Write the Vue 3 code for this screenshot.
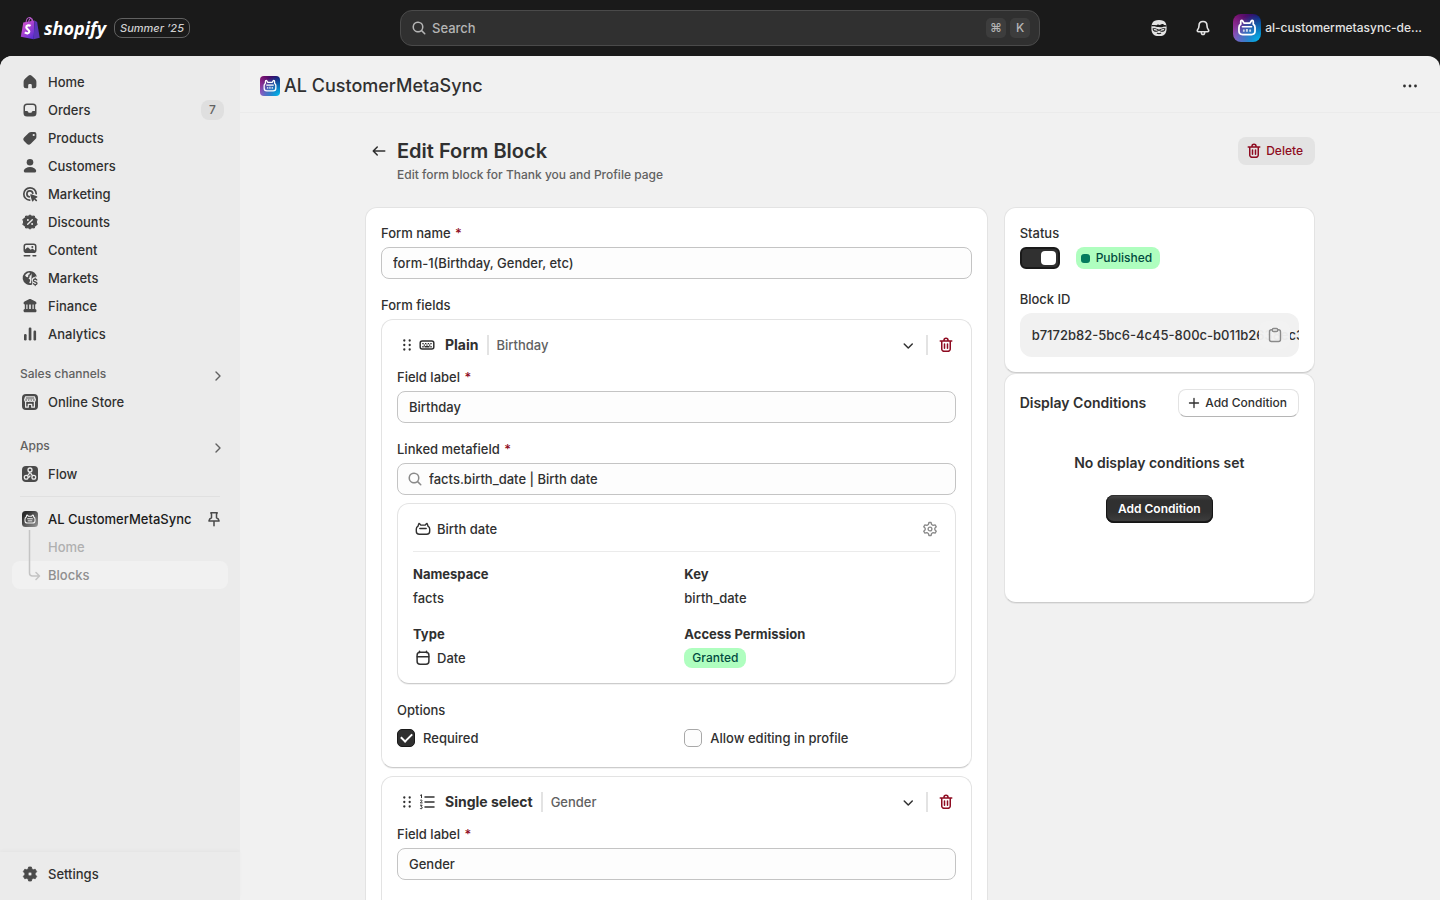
<script setup>
import { h, ref } from 'vue'

const trash = '<path d="M11.5 8.25a.75.75 0 0 1 .75.75v4.25a.75.75 0 0 1-1.5 0V9a.75.75 0 0 1 .75-.75Z"/><path d="M9.25 9a.75.75 0 0 0-1.5 0v4.25a.75.75 0 0 0 1.5 0V9Z"/><path fill-rule="evenodd" d="M7.25 5.25a2.75 2.75 0 0 1 5.5 0h3a.75.75 0 0 1 0 1.5H15v5.45c0 1.68 0 2.52-.327 3.162a3 3 0 0 1-1.311 1.311c-.642.327-1.482.327-3.162.327h-.4c-1.68 0-2.52 0-3.162-.327a3 3 0 0 1-1.311-1.311C5 14.72 5 13.88 5 12.2V6.75h-.75a.75.75 0 0 1 0-1.5h3Zm1.5 0a1.25 1.25 0 1 1 2.5 0h-2.5ZM6.5 6.75h7v5.45c0 .865-.001 1.423-.036 1.848-.033.408-.09.559-.128.633a1.5 1.5 0 0 1-.655.655c-.074.038-.225.095-.633.128-.425.035-.983.036-1.848.036h-.4c-.865 0-1.423-.001-1.848-.036-.408-.033-.559-.09-.633-.128a1.5 1.5 0 0 1-.656-.655c-.037-.074-.094-.225-.127-.633-.035-.425-.036-.983-.036-1.848V6.75Z"/>'
const line = (d, w = 1.5) => `<g fill="none" stroke="currentColor" stroke-width="${w}" stroke-linecap="round" stroke-linejoin="round">${d}</g>`
const catBox = line('<path d="M5 7.200 5.700 4.900c.1-.4.6-.5.9-.2l1.200 1.400h4.400l1.200-1.400c.3-.3.8-.2.9.2l.7 2.300c1.100.6 1.700 1.600 1.700 2.900v2.100c0 2-1.100 3.100-3.100 3.100H6.400c-2 0-3.100-1.100-3.100-3.100v-2.100c0-1.300.6-2.300 1.700-2.900Z"/><path d="M6.800 9.500h6.400"/>', 1.400)

const icons = {
  home: '<path d="M8.300 3.700a2.500 2.500 0 0 1 3.400 0l3.500 3.300c.8.700 1.200 1.700 1.200 2.800v4a2.500 2.500 0 0 1-2.500 2.500h-1.200a.9.900 0 0 1-.9-.9v-2.200a1.200 1.200 0 0 0-1.200-1.200h-1.200a1.200 1.200 0 0 0-1.200 1.200v2.200a.9.900 0 0 1-.9.900H6.100a2.500 2.500 0 0 1-2.500-2.500v-4c0-1.100.4-2.100 1.200-2.800l3.500-3.300Z"/>',
  orders: '<path fill-rule="evenodd" d="M7 3.500h6a3.500 3.500 0 0 1 3.500 3.500v6a3.500 3.500 0 0 1-3.500 3.500H7A3.500 3.500 0 0 1 3.500 13V7A3.500 3.500 0 0 1 7 3.500ZM7 5a2 2 0 0 0-2 2v4h2c.5 0 .8.200 1 .6l.3.600c.2.400.5.600 1 .6h1.400c.5 0 .8-.2 1-.6l.3-.6c.2-.4.5-.6 1-.6h2V7a2 2 0 0 0-2-2H7Z"/>',
  products: '<path fill-rule="evenodd" d="M11.200 4h3.300A1.900 1.900 0 0 1 16.400 5.900v3c0 .8-.3 1.500-.9 2.100l-4.700 4.700a2.800 2.800 0 0 1-4 0L4.300 13.200a2.800 2.800 0 0 1 0-4L8.900 4.800c.6-.5 1.400-.8 2.300-.8Zm2.500 4.100a1.100 1.100 0 1 0 0-2.200 1.100 1.100 0 0 0 0 2.200Z"/>',
  customers: '<circle cx="10" cy="6.300" r="3.300"/><path d="M3.800 14.900c0-1 .8-2 2-2.700 1.200-.7 2.600-1.100 4.200-1.100s3 .4 4.200 1.100c1.200.7 2 1.700 2 2.700 0 .9-.7 1.500-1.600 1.500H5.400c-.9 0-1.600-.6-1.600-1.500Z"/>',
  marketing: line('<path d="M16.200 9.700a6.200 6.200 0 1 0-6.500 6.500"/><path d="M12.800 9.300a3 3 0 1 0-3.500 3.600"/>', 1.700) + '<path d="M10.300 11.200c-.2-.6.300-1.100.9-.9l5.700 1.900c.7.200.7 1.100.1 1.400l-1.700.8 1.700 1.700a.8.800 0 0 1-1.100 1.100l-1.700-1.700-.8 1.600c-.3.600-1.200.6-1.400-.1l-1.700-5.800Z"/>',
  discounts: '<path d="m10 2.900 1.900 1.400 2.400-.3.700 2.200 2.200 1.200-.9 2.600.9 2.600-2.200 1.200-.7 2.200-2.400-.3L10 17.100l-1.900-1.400-2.400.3-.7-2.200-2.200-1.200.9-2.600-.9-2.600L5 6.200 5.700 4l2.400.3L10 2.900Z" stroke="currentColor" stroke-linejoin="round"/><path d="m7.700 12.300 4.600-4.600" stroke="#ebebeb" stroke-width="1.400" stroke-linecap="round"/><circle cx="7.900" cy="8" r="1" fill="#ebebeb"/><circle cx="12.100" cy="12" r="1" fill="#ebebeb"/>',
  content: '<path fill-rule="evenodd" d="M6.300 3.500h7.400a2.800 2.800 0 0 1 2.800 2.800v4a2.800 2.800 0 0 1-2.800 2.800H6.300a2.800 2.800 0 0 1-2.800-2.800v-4a2.800 2.800 0 0 1 2.800-2.800ZM6.300 5C5.600 5 5 5.600 5 6.300v3.200l1.700-1.600c.6-.6 1.400-.6 2 0l2 1.900.7-.6c.6-.5 1.300-.5 1.900 0l1.700 1.200V6.300c0-.7-.6-1.300-1.300-1.300H6.300Z"/><circle cx="12.300" cy="7" r="1"/>' + line('<path d="M4.200 15.800h5.600M13 15.800h2.800"/>', 1.400),
  markets: '<path fill-rule="evenodd" d="M10 3a7 7 0 0 1 6.900 5.900c-.7-.4-1.600-.4-2.300 0-1.700.1-2.900 1.400-2.900 3 0 .8.3 1.500.8 2-.6.800-.7 1.700-.3 2.600A7 7 0 1 1 10 3Zm-.5 1.500C7.800 4.700 6 5.800 5.100 7.500l1.100 1.300c.4.500 1.200.6 1.700.2.500-.5.400-1 .3-1.500 0-.5.300-.9.800-1 .8-.1 1-.7.700-1.200l-.2-.8Zm2.300.4c-.2 1.600-1 2.300-2.200 2.800.3 1.300-.3 2.400-1.300 2.900.9.400 2 .8 1.800 2.100-.1.900-.8 1.200-.8 2.400.6.100 1.200 0 1.800-.2"/>' + line('<path d="M16.800 12c-.4-.7-1-.9-1.700-.9-1 0-1.700.5-1.700 1.300 0 1.900 3.600.8 3.600 2.900 0 .8-.8 1.400-1.800 1.400-.9 0-1.600-.4-1.900-1.100M15.200 10.200v.9M15.200 16.700v.900"/>', 1.300),
  finance: '<path fill-rule="evenodd" d="M9 3.200c.6-.3 1.400-.3 2 0l4.500 2.300c.6.300 1 .9 1 1.500 0 .8-.6 1.400-1.300 1.500v4.600c.8.200 1.300.8 1.300 1.600 0 1-.6 1.500-1.500 1.500H5c-.9 0-1.500-.6-1.500-1.500 0-.8.500-1.400 1.300-1.600V8.500A1.500 1.500 0 0 1 3.500 7c0-.6.4-1.200 1-1.500L9 3.200ZM6.300 8.600V13h1.200V8.600H6.300Zm2.900 0V13h1.600V8.600H9.200Zm3.300 0V13h1.200V8.600h-1.200Z"/>',
  analytics: '<rect x="8.700" y="3.500" width="2.700" height="13" rx="1.200"/><rect x="4" y="10" width="2.600" height="6.500" rx="1.200"/><rect x="13.500" y="6.500" width="2.600" height="10" rx="1.200"/>',
  settings: '<path fill-rule="evenodd" d="M8.600 3h2.800l.5 2 1.300.8 2-.6 1.500 2.500-1.500 1.500v1.600l1.500 1.500-1.500 2.500-2-.6-1.300.8-.5 2H8.600l-.5-2-1.300-.8-2 .6-1.500-2.500 1.500-1.500V9.200L3.300 7.700l1.500-2.500 2 .6L8.100 5l.5-2ZM10 12a2 2 0 1 0 0-4 2 2 0 0 0 0 4Z" stroke="currentColor" stroke-width=".8" stroke-linejoin="round"/>',
  gear: line('<path d="M8.900 3.500h2.200l.5 2 1.500.9 2-.6 1.200 2-1.500 1.400v1.600l1.500 1.400-1.200 2-2-.6-1.500.9-.5 2H8.900l-.5-2-1.500-.9-2 .6-1.200-2 1.500-1.400V9.200L3.700 7.800l1.200-2 2 .6 1.500-.9.500-2Z"/><circle cx="10" cy="10" r="1.900"/>', 1.300),
  store: '<rect x="2" y="2" width="16" height="16" rx="4"/><g fill="none" stroke="#ebebeb" stroke-width="1.200" stroke-linejoin="round"><path d="M5.600 4.800h8.800l1 3c0 1-.7 1.600-1.500 1.600S12.500 8.900 12.500 8c0 .9-.6 1.400-1.300 1.400S10 8.900 10 8c0 .9-.6 1.400-1.300 1.400S7.500 8.900 7.500 8c0 .9-.6 1.400-1.400 1.400S4.600 8.800 4.600 7.800l1-3ZM4.800 7h10.400M5.600 9.500v5.700h2.700v-2.900h3.400v2.900h2.700V9.500"/></g>',
  flow: '<rect x="2" y="2" width="16" height="16" rx="4"/><g fill="none" stroke="#ebebeb" stroke-width="1.300"><circle cx="10" cy="6" r="2"/><circle cx="6.200" cy="13.300" r="1.900"/><circle cx="13.800" cy="13.300" r="1.900"/><path d="M9.700 8c0 1.800-.8 2.500-2.300 3.700M8.100 13.300c1.500 0 1.900-.7 1.900-1.800M12.600 11.800 10.500 9"/></g>',
  appGray: '<defs><linearGradient id="ag" x1="0" y1="0" x2="1" y2="1"><stop offset=".2" stop-color="#2c2c2c"/><stop offset="1" stop-color="#9a9a9a"/></linearGradient></defs><rect x="2" y="2" width="16" height="16" rx="3.500" fill="url(#ag)"/><g transform="translate(2.500 2.600) scale(.75)" color="#f3f3f3">' + catBox + '<path d="M7 12.300h6" stroke="#ddd" stroke-width="1.500"/></g>',
  catBox,
  catWhite: line('<path d="M4.300 6.700V4.200c0-.7.300-1.100.9-1.100.4 0 .7.200.9.500l1.200 2h5.400l1.200-2c.2-.3.5-.5.9-.5.600 0 .9.400.9 1.100v2.500c1 .6 1.600 1.500 1.600 2.800v3.300c0 2.100-1.200 3.200-3.300 3.200H6c-2.100 0-3.300-1.100-3.300-3.200V9.500c0-1.300.6-2.200 1.600-2.800Z"/>', 1.600) + '<path d="M5.800 8.900h8.400" stroke="currentColor" stroke-width="1.300" stroke-linecap="round"/><path d="M6.300 11.300h1.600v2H6.300zM9 11h1.800v2.500H9zM12 11.300h1.700v2H12z" opacity=".75"/>',
  chevronRight: line('<path d="m8 6 4 4-4 4"/>', 1.400),
  chevronDown: '<path d="M5.720 8.470a.75.75 0 0 1 1.060 0l3.470 3.470 3.470-3.470a.75.75 0 1 1 1.060 1.060l-4 4a.75.75 0 0 1-1.060 0l-4-4a.75.75 0 0 1 0-1.060"/>',
  pin: line('<path d="M6.800 3.800h6.400l-.7 1.400v3.600c1.600.7 2.400 1.700 2.600 3.200H4.900c.2-1.500 1-2.500 2.600-3.200V5.200l-.7-1.400ZM10 12v4.800"/>'),
  search: '<path fill-rule="evenodd" d="M12.323 13.383a5.500 5.500 0 1 1 1.060-1.060l2.897 2.897a.75.75 0 1 1-1.060 1.060l-2.897-2.897ZM13 9a4 4 0 1 1-8 0 4 4 0 0 1 8 0Z"/>',
  bell: line('<path d="M10 3.500c-2.500 0-4 1.800-4 4.200 0 2.200-.4 2.900-1.400 4.100-.7.900-.2 1.900.9 1.900h9c1.100 0 1.600-1 .9-1.900-1-1.200-1.400-1.900-1.400-4.100 0-2.400-1.500-4.200-4-4.200ZM8.300 14.200c0 1.500.6 2.300 1.700 2.300s1.700-.8 1.700-2.300"/>', 1.600),
  sidekick: '<path d="M10 2c3.500 0 5.400.8 6.500 2.800.9 1.500 1.100 3.200 1.100 5.200s-.2 3.700-1.100 5.200C15.400 17.200 13.500 18 10 18s-5.400-.8-6.500-2.800C2.600 13.700 2.400 12 2.400 10s.2-3.700 1.100-5.200C4.600 2.800 6.500 2 10 2Z"/><path d="M2.400 7.200c2.300-.3 3.600.1 5.200.1.300-.7 1-1 1.800-.7l1 .4c1.500-.3 2.600-1 4.500-.9l-.6 1c1.100 0 2.200 0 3.300.3l-.1 1-3.200.3c-1.500.7-3 .8-4.300.2-1.500.4-3.200.2-4.300-.6l-3.300-.1v-1Z" fill="#1a1a1a"/><path d="M3.600 10.300c2.300-.3 4.600.3 6.400 1.400 1.800-1.100 4.100-1.700 6.400-1.400.1 2.200-.9 3.500-2.800 3.500-1.500 0-2.600-.8-3.600-1.400-1 .6-2.100 1.400-3.600 1.400-1.900 0-2.900-1.300-2.800-3.500Z" fill="#1a1a1a"/><path d="M5.300 11.700c1 0 1.900.1 2.700.5M14.700 11.700c-1 0-1.900.1-2.700.5" stroke="currentColor" stroke-width="1.200" stroke-linecap="round"/><path d="M8.300 15.300c1.100.5 2.300.5 3.400 0" fill="none" stroke="#1a1a1a" stroke-width="1.100" stroke-linecap="round"/>',
  more: '<circle cx="4.500" cy="10" r="1.400"/><circle cx="10" cy="10" r="1.400"/><circle cx="15.500" cy="10" r="1.400"/>',
  arrowLeft: '<path d="M16.500 10a.75.75 0 0 1-.75.75H6.060l2.720 2.720a.75.75 0 0 1-1.060 1.060l-4-4a.75.75 0 0 1 0-1.060l4-4a.75.75 0 1 1 1.060 1.060L6.060 9.250h9.690a.75.75 0 0 1 .75.75Z"/>',
  trash,
  drag: '<g><circle cx="7.300" cy="5.500" r="1.150"/><circle cx="7.300" cy="10" r="1.150"/><circle cx="7.300" cy="14.500" r="1.150"/><circle cx="12.700" cy="5.500" r="1.150"/><circle cx="12.700" cy="10" r="1.150"/><circle cx="12.700" cy="14.500" r="1.150"/></g>',
  keyboard: line('<rect x="3.200" y="6" width="13.600" height="8" rx="2"/><path d="M8 11.800h4"/>') + '<path d="M5.300 8h1.400v1.300H5.300zM8 8h1.400v1.300H8zM10.700 8h1.400v1.300h-1.400zM13.300 8h1.400v1.300h-1.400zM5.300 11.100h1.400v1.300H5.300zM13.300 11.100h1.400v1.300h-1.400zM6.700 9.600H8v1.200H6.700zM9.400 9.600h1.200v1.200H9.400zM12 9.600h1.300v1.200H12z"/>',
  numbered: line('<path d="M8 5h9M8 10h9M8 15h9"/>') + line('<path d="m3.500 3.300 1-.6v3M3.300 8.300c.5-.6 1.700-.5 1.700.4 0 .7-1 1.200-1.700 2.200H5.200M3.400 13.200h1.700l-1 1.400c1.500 0 1.500 2.200 0 2.200-.4 0-.7-.1-.9-.4"/>', 1),
  calendar: line('<path d="M6.500 3.300v1.200M13.500 3.300v1.200"/><rect x="4.100" y="4.300" width="11.800" height="11.900" rx="3"/><path d="M4.300 8.800h11.400"/>'),
  clipboard: line('<path d="M7.300 4.800H6.500c-1.100 0-2 .9-2 2v7.700c0 1.100.9 2 2 2h7c1.100 0 2-.9 2-2V6.800c0-1.100-.9-2-2-2h-.8"/><rect x="7.300" y="3.500" width="5.400" height="3" rx="1.300"/>', 1.400),
  plus: line('<path d="M10 5v10M5 10h10"/>'),
}

const Icon = (props) => h('svg', { viewBox: '0 0 20 20', fill: 'currentColor', 'aria-hidden': 'true', innerHTML: icons[props.name] })
Icon.props = ['name']

const nav = [
  { label: 'Home', icon: 'home' },
  { label: 'Orders', icon: 'orders', count: 7 },
  { label: 'Products', icon: 'products' },
  { label: 'Customers', icon: 'customers' },
  { label: 'Marketing', icon: 'marketing' },
  { label: 'Discounts', icon: 'discounts' },
  { label: 'Content', icon: 'content' },
  { label: 'Markets', icon: 'markets' },
  { label: 'Finance', icon: 'finance' },
  { label: 'Analytics', icon: 'analytics' },
]

const formName = ref('form-1(Birthday, Gender, etc)')
const birthdayLabel = ref('Birthday')
const metafield = ref('facts.birth_date | Birth date')
const genderLabel = ref('Gender')
const required = ref(true)
const editable = ref(false)
const published = ref(true)
</script>

<template>
  <div class="shell">
    <header class="topbar">
      <a class="brand" href="#" aria-label="shopify home">
        <svg class="bag" viewBox="0 0 20 24" aria-hidden="true">
          <defs>
            <linearGradient id="bagFill" x1="0" y1="0" x2="0.8" y2="1">
              <stop offset="0" stop-color="#e05bd0" /><stop offset="0.55" stop-color="#a23fd0" /><stop offset="1" stop-color="#5b2fd6" />
            </linearGradient>
          </defs>
          <path d="M6 7c.2-3 1.700-5.500 3.500-5.500 1.500 0 2.500 1.700 2.500 4M8.500 6.500C9 3.500 10 2.300 11 2.500c1.200.2 1.700 1.500 1.700 3" fill="none" stroke="#b558c8" stroke-width="1.100" />
          <path d="M3.300 6.400 14.500 4.500l-.8 18.700L.8 20.800Z" fill="url(#bagFill)" />
          <path d="m14.500 4.500 2.600 1.600 2.600 15.600-6 1.500Z" fill="#5a35b8" />
          <path d="M10.600 9.800c-1.300-.9-4.300-.7-4.300 1.500 0 2 3.300 2.100 3 4.400-.3 2-2.700 2-4.500.7" fill="none" stroke="#fff" stroke-width="2.200" />
        </svg>
        <span class="wordmark">shopify</span>
        <span class="edition">Summer ’25</span>
      </a>
      <label class="search">
        <Icon name="search" class="ic" />
        <input type="text" placeholder="Search" aria-label="Search" />
        <kbd>⌘</kbd><kbd>K</kbd>
      </label>
      <div class="actions">
        <button class="top-btn" aria-label="Sidekick"><Icon name="sidekick" class="ic" /></button>
        <button class="top-btn" aria-label="Notifications"><Icon name="bell" class="ic" /></button>
        <button class="account">
          <span class="app-logo large"><Icon name="catWhite" /></span>
          <span>al-customermetasync-de...</span>
        </button>
      </div>
    </header>

    <div class="frame">
      <aside class="sidebar">
        <nav class="nav">
          <a v-for="item in nav" :key="item.label" class="item" href="#">
            <Icon :name="item.icon" class="ic" />
            <span class="grow">{{ item.label }}</span>
            <span v-if="item.count" class="count">{{ item.count }}</span>
          </a>
          <button class="section first">Sales channels<Icon name="chevronRight" class="ic" /></button>
          <a class="item" href="#"><Icon name="store" class="ic" />Online Store</a>
          <button class="section">Apps<Icon name="chevronRight" class="ic" /></button>
          <a class="item" href="#"><Icon name="flow" class="ic" />Flow</a>
          <hr />
          <div class="app-group">
            <a class="item" href="#"><Icon name="appGray" class="ic" /><span class="grow">AL CustomerMetaSync</span><Icon name="pin" class="ic" /></a>
            <a class="item sub" href="#">Home</a>
            <a class="item sub current" href="#">Blocks</a>
            <svg class="branch" viewBox="0 0 14 54" aria-hidden="true">
              <path d="M1.500 0v43c0 2 1 3 3 3h6.500M8 42.500l3.500 3.500L8 49.500" fill="none" stroke="#c4c4c4" stroke-width="1.500" stroke-linecap="round" stroke-linejoin="round" />
            </svg>
          </div>
        </nav>
        <div class="nav-foot">
          <a class="item" href="#"><Icon name="settings" class="ic" />Settings</a>
        </div>
      </aside>

      <main class="main">
        <div class="appbar">
          <span class="app-logo"><Icon name="catWhite" /></span>
          <span class="app-title">AL CustomerMetaSync</span>
          <button class="icon-btn" aria-label="More actions"><Icon name="more" class="ic" /></button>
        </div>

        <div class="page">
          <div class="page-head">
            <button class="icon-btn back" aria-label="Back"><Icon name="arrowLeft" class="ic" /></button>
            <div class="grow">
              <h1>Edit Form Block</h1>
              <p>Edit form block for Thank you and Profile page</p>
            </div>
            <button class="delete"><Icon name="trash" class="ic" />Delete</button>
          </div>

          <div class="layout">
            <section class="card form">
              <div class="field">
                <label for="form-name">Form name <i>*</i></label>
                <input id="form-name" v-model="formName" class="text" type="text" />
              </div>
              <div class="field">
                <span class="label">Form fields</span>
                <div class="blocks">
                  <article class="card block">
                    <div class="block-head">
                      <Icon name="drag" class="ic" />
                      <Icon name="keyboard" class="ic" />
                      <h2>Plain</h2>
                      <span class="rule"></span>
                      <span class="muted grow">Birthday</span>
                      <button class="icon-btn" aria-label="Collapse Birthday"><Icon name="chevronDown" class="ic" /></button>
                      <span class="rule"></span>
                      <button class="icon-btn danger" aria-label="Delete Birthday"><Icon name="trash" class="ic" /></button>
                    </div>
                    <div class="field">
                      <label for="birthday-label">Field label <i>*</i></label>
                      <input id="birthday-label" v-model="birthdayLabel" class="text" type="text" />
                    </div>
                    <div class="field">
                      <label for="metafield">Linked metafield <i>*</i></label>
                      <div class="with-icon">
                        <Icon name="search" class="ic" />
                        <input id="metafield" v-model="metafield" class="text" type="text" />
                      </div>
                    </div>
                    <div class="card meta">
                      <div class="meta-head">
                        <Icon name="catBox" class="ic" />
                        <span class="grow">Birth date</span>
                        <button class="icon-btn faded" aria-label="Metafield settings"><Icon name="gear" class="ic" /></button>
                      </div>
                      <dl class="columns">
                        <div><dt>Namespace</dt><dd>facts</dd></div>
                        <div><dt>Key</dt><dd>birth_date</dd></div>
                        <div><dt>Type</dt><dd><Icon name="calendar" class="ic" />Date</dd></div>
                        <div><dt>Access Permission</dt><dd><span class="badge">Granted</span></dd></div>
                      </dl>
                    </div>
                    <div class="options">
                      <span class="label">Options</span>
                      <div class="columns">
                        <label class="check"><input v-model="required" type="checkbox" />Required</label>
                        <label class="check"><input v-model="editable" type="checkbox" />Allow editing in profile</label>
                      </div>
                    </div>
                  </article>

                  <article class="card block">
                    <div class="block-head">
                      <Icon name="drag" class="ic" />
                      <Icon name="numbered" class="ic" />
                      <h2>Single select</h2>
                      <span class="rule"></span>
                      <span class="muted grow">Gender</span>
                      <button class="icon-btn" aria-label="Collapse Gender"><Icon name="chevronDown" class="ic" /></button>
                      <span class="rule"></span>
                      <button class="icon-btn danger" aria-label="Delete Gender"><Icon name="trash" class="ic" /></button>
                    </div>
                    <div class="field tall">
                      <label for="gender-label">Field label <i>*</i></label>
                      <input id="gender-label" v-model="genderLabel" class="text" type="text" />
                    </div>
                  </article>
                </div>
              </div>
            </section>

            <div class="side">
              <section class="card">
                <div class="field">
                  <label for="status">Status</label>
                  <div class="status">
                    <input id="status" v-model="published" class="toggle" type="checkbox" role="switch" />
                    <span class="badge big"><span class="dot"></span>Published</span>
                  </div>
                </div>
                <div class="field">
                  <span class="label">Block ID</span>
                  <div class="block-id">
                    b7172b82-5bc6-4c45-800c-b011b2638ec3
                    <button aria-label="Copy block ID"><Icon name="clipboard" class="ic" /></button>
                  </div>
                </div>
              </section>
              <section class="card">
                <div class="cond-head">
                  <h2>Display Conditions</h2>
                  <button class="secondary"><Icon name="plus" class="ic small" />Add Condition</button>
                </div>
                <div class="empty">
                  <h3>No display conditions set</h3>
                  <button class="primary">Add Condition</button>
                </div>
              </section>
            </div>
          </div>
        </div>
      </main>
    </div>
  </div>
</template>

<style>
body { margin: 0; background: #1a1a1a; }
</style>

<style scoped>
* { box-sizing: border-box; }
.shell { display: flex; flex-direction: column; height: 100vh; overflow: hidden; background: #1a1a1a; color: #303030; font: 450 13px/20px Inter, sans-serif; }
button, input, kbd { font: inherit; color: inherit; }
button { border: 0; padding: 0; background: none; cursor: pointer; }
h1, h2, h3, p, dl, dd { margin: 0; }
a { color: inherit; text-decoration: none; }
.ic { width: 20px; height: 20px; flex: none; display: block; }
.ic.small { width: 18px; height: 18px; }
.grow { flex: 1; min-width: 0; }

.topbar { flex: none; height: 56px; display: grid; grid-template-columns: 1fr minmax(0, 640px) 1fr; align-items: center; color: #e3e3e3; }
.brand { display: flex; align-items: center; padding-left: 20px; }
.bag { width: 20px; height: 24px; margin-right: 4px; }
.wordmark { font: italic 700 18px/28px "Open Sans", sans-serif; color: #fff; }
.edition { margin-left: 8px; padding: 0 5px; height: 20px; border: 1px solid #616161; border-radius: 8px; font-size: 11px; font-weight: 550; font-style: italic; line-height: 18px; color: #cfcfcf; white-space: nowrap; }
.search { display: flex; align-items: center; gap: 3px; height: 36px; padding: 0 9px 0 8px; border: 1px solid #4a4a4a; border-radius: 12px; background: #303030; color: #b5b5b5; }
.search input { flex: 1; min-width: 0; border: 0; padding: 0; background: none; outline: 0; }
.search input::placeholder { color: #b5b5b5; opacity: 1; }
.search kbd { width: 20px; height: 20px; border-radius: 5px; background: #3d3d3d; text-align: center; font-size: 12px; font-weight: 550; }
.search kbd + kbd { margin-left: 1px; }
.actions { display: flex; align-items: center; justify-content: flex-end; gap: 12px; padding-right: 18px; }
.top-btn { display: grid; place-items: center; width: 32px; height: 32px; }
.account { display: flex; align-items: center; gap: 4px; margin-left: 2px; font-size: 12px; font-weight: 550; white-space: nowrap; }
.app-logo { display: grid; place-items: center; flex: none; width: 20px; height: 20px; border-radius: 4px; color: #fff; background: radial-gradient(circle at 100% 100%, #00c3f5 0, #00b4ee66 50%, transparent 75%), radial-gradient(circle at 0 100%, #9a5bc8 0, transparent 70%), linear-gradient(90deg, #85106e, #0d0a68); }
.app-logo svg { width: 16px; height: 16px; }
.app-logo.large { width: 28px; height: 28px; border-radius: 8px; }
.app-logo.large svg { width: 22px; height: 22px; }

.frame { flex: 1; min-height: 0; display: grid; grid-template-columns: 240px minmax(0, 1fr); border-radius: 12px 12px 0 0; overflow: hidden; background: #f1f1f1; }
.sidebar { display: flex; flex-direction: column; min-height: 0; background: #ebebeb; }
.nav { flex: 1; min-height: 0; overflow: hidden; padding: 12px 12px 0; }
.item { display: flex; align-items: center; gap: 8px; height: 28px; padding: 0 4px 0 8px; border-radius: 8px; font-weight: 550; }
.item .ic { color: #4a4a4a; }
.count { min-width: 23px; height: 20px; border-radius: 8px; background: #dfdfdf; text-align: center; font-size: 12px; color: #616161; }
.section { display: flex; align-items: center; justify-content: space-between; width: 100%; height: 28px; margin-top: 16px; padding: 0 0 0 8px; color: #616161; font-weight: 550; font-size: 12px; }
.section .ic { margin-top: 4px; }
.section.first { margin-top: 12px; }
hr { margin: 8px; border: 0; border-top: 1px solid #e0e0e0; }
.app-group { position: relative; }
.app-group .item { color: #1a1a1a; }
.app-group .item.sub { padding-left: 36px; color: #b0b0b0; }
.app-group .item.current { background: #f1f1f1; color: #8f8f8f; }
.branch { position: absolute; left: 16px; top: 25px; width: 14px; height: 54px; }
.nav-foot { padding: 8px 12px 12px; box-shadow: 0 -2px 3px #00000006; }

.main { overflow: hidden; }
.appbar { display: flex; align-items: center; gap: 4px; height: 57px; padding: 4px 20px 0; border-bottom: 1px solid #ebebeb; }
.app-title { flex: 1; font-size: 18px; font-weight: 550; }
.icon-btn { display: block; }
.page { max-width: 998px; margin: 0 auto; padding: 24px 24px 0; }
.page-head { display: flex; align-items: flex-start; gap: 8px; margin-bottom: 22px; }
h1 { font-size: 20px; font-weight: 600; line-height: 28px; }
p { color: #616161; font-size: 12px; }
.back { padding: 4px 0 4px 4px; }
.delete { display: flex; align-items: center; gap: 2px; height: 28px; padding: 0 12px 0 6px; border-radius: 8px; background: #e3e3e3; color: #8e0b21; font-size: 12px; font-weight: 550; }
.layout { display: grid; grid-template-columns: minmax(0, 2fr) minmax(0, 1fr); gap: 16px; align-items: start; }
.card { padding: 15px; border-radius: 12px; background: #fff; border: 1px solid #e3e3e3; border-bottom-color: #ccc; box-shadow: 0 1px 0 #0000000d; }
.field { display: flex; flex-direction: column; gap: 4px; margin-bottom: 16px; }
i { color: #8e0b21; font-style: normal; margin-left: 1px; }
.text { width: 100%; height: 32px; padding: 0 11px; border: 1px solid #c4c4c4; border-radius: 8px; background: #fdfdfd; }
.blocks { display: flex; flex-direction: column; gap: 8px; }
.block-head { display: flex; align-items: center; height: 20px; margin-bottom: 12px; }
.block-head h2 { margin: 0 8px; font-size: 14px; font-weight: 650; }
.rule { width: 2px; height: 20px; background: #e3e3e3; }
.muted { margin-left: 8px; color: #616161; }
.block-head .icon-btn { margin: 0 8px; }
.block-head .icon-btn:last-child { margin-right: 0; }
.danger { color: #8e0b21; }
.faded { color: #8a8a8a; }
.with-icon { position: relative; }
.with-icon .ic { position: absolute; left: 8px; top: 6px; color: #8a8a8a; }
.with-icon .text { padding-left: 31px; }
.block .field:has(+ .meta) { margin-bottom: 8px; }
.meta-head { display: flex; align-items: center; gap: 4px; padding-bottom: 12px; border-bottom: 1px solid #ebebeb; margin-bottom: 12px; }
.columns { display: grid; grid-template-columns: 1fr 1fr; gap: 16px; }
dt { font-weight: 650; margin-bottom: 4px; }
dd { display: flex; align-items: center; gap: 4px; height: 20px; }
.badge { display: inline-flex; align-items: center; height: 20px; padding: 0 8px; border-radius: 8px; background: #affebf; color: #014b40; font-size: 12px; font-weight: 500; }
.badge.big { height: 22px; padding: 0 8px 0 5px; gap: 6px; }
.dot { width: 9px; height: 9px; border-radius: 3px; background: #047b5d; }
.options { display: flex; flex-direction: column; gap: 8px; margin: 16px 0 4px; }
.check { display: flex; align-items: center; gap: 8px; }
.check input { appearance: none; flex: none; width: 18px; height: 18px; margin: 0; border: 1px solid #a8a8a8; border-radius: 5px; background: #fdfdfd; display: grid; place-items: center; }
.check input:checked { background: #303030; border-color: #1a1a1a; }
.check input:checked::after { content: ""; width: 9px; height: 5px; margin-bottom: 3px; border: solid #fff; border-width: 0 0 2px 2px; transform: rotate(-45deg); }
.tall { min-height: 96px; }

.side { display: flex; flex-direction: column; }
.side .field:last-child { margin-bottom: 0; }
.status { display: flex; align-items: center; gap: 16px; height: 22px; margin-bottom: 4px; }
.toggle { appearance: none; position: relative; width: 40px; height: 22px; margin: 0; border: 2px solid #1a1a1a; border-radius: 6px; background: #303030; }
.toggle::after { content: ""; position: absolute; top: 2px; left: 2px; width: 15px; height: 14px; border-radius: 4px; background: #fff; }
.toggle:checked::after { left: 19px; }
.block-id { position: relative; height: 44px; padding: 0 12px; border-radius: 12px; background: #f1f1f1; line-height: 44px; white-space: nowrap; overflow: hidden; }
.block-id button { position: absolute; right: 9px; top: 8px; display: grid; place-items: center; width: 31px; height: 28px; border-radius: 8px; background: #f1f1f1f5; color: #8a8a8a; }
.cond-head { display: flex; align-items: center; justify-content: space-between; }
.side h2, h3 { font-size: 14px; font-weight: 600; }
.secondary { display: flex; align-items: center; gap: 2px; height: 28px; padding: 0 11px 0 6px; border-radius: 8px; border: 1px solid #e3e3e3; border-bottom-color: #b5b5b5; background: #fff; font-size: 12px; font-weight: 550; }
.empty { display: flex; flex-direction: column; align-items: center; gap: 22px; padding: 36px 0 64px; }
.primary { height: 28px; padding: 0 12px; border-radius: 8px; background: linear-gradient(#4a4a4a, #303030 20%, #303030 60%, #404040); box-shadow: inset 0 -1px 0 1px #0000008c, inset 0 0 0 1px #303030; color: #fff; font-size: 12px; font-weight: 600; }
</style>
